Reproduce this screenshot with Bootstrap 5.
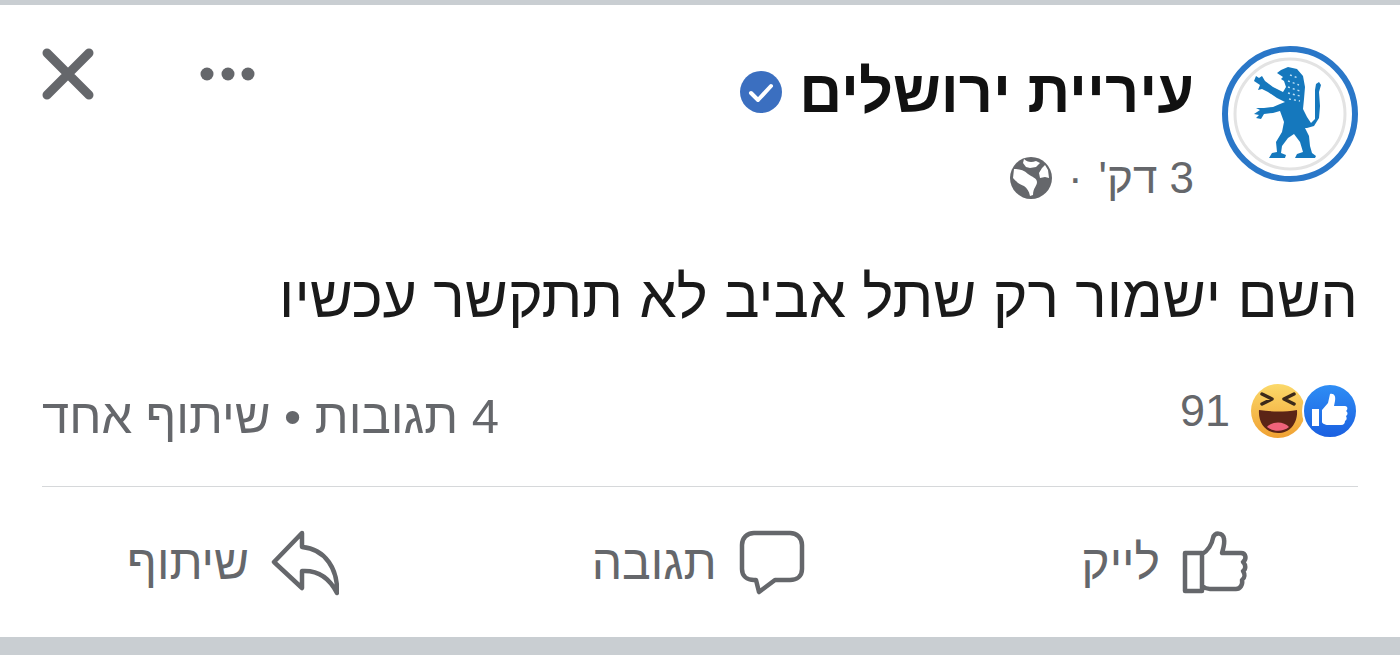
<!DOCTYPE html>
<html lang="he" dir="rtl">

<head>
    <meta charset="UTF-8">
    <meta name="viewport" content="width=device-width, initial-scale=1.0">
    <title>עיריית ירושלים</title>

    <link href="https://cdn.jsdelivr.net/npm/bootstrap@5.3.0/dist/css/bootstrap.min.css" rel="stylesheet">

    <style>
        html, body {
            height: 655px;
            overflow: hidden;
        }

        body {
            background-color: #fff;
            font-family: "Liberation Sans", sans-serif;
        }

        .page-wrap {
            height: 655px;
            border-top: 5px solid #c9ced2;
            border-bottom: 18px solid #c9ced2;
            padding: 41px 42px 0;
        }

        .post-avatar {
            width: 136px;
            height: 136px;
            flex: none;
        }

        .post-head {
            height: 136px;
        }

        .post-title {
            padding-right: 28px;
            padding-top: 12px;
        }

        .post-name {
            font-size: 59.5px;
            line-height: 68px;
            font-weight: 700;
            color: #111;
        }

        .post-time {
            font-size: 44px;
            line-height: 50px;
            color: #65676b;
            margin-top: 27px;
        }

        .head-tools {
            margin-top: 2px;
            gap: 106px;
        }

        .post-text {
            font-size: 59px;
            line-height: 70px;
            color: #1a1a1a;
            margin-top: 80px;
            height: 70px;
        }

        .post-stats {
            margin-top: 54px;
            height: 60px;
            color: #65676b;
            font-size: 49px;
            line-height: 60px;
        }

        .react-group {
            margin-bottom: 11px;
            font-size: 45px;
        }

        .react-count {
            margin-right: 20px;
        }

        .react-icons svg {
            overflow: visible;
        }

        .react-icons .react-like {
            position: relative;
            z-index: 1;
        }

        .react-icons .react-haha {
            margin-right: -4px;
        }

        .post-rule {
            border-top: 1px solid #d6d8da;
            margin-top: 40px;
        }

        .post-actions {
            margin-top: 40px;
            color: #65676b;
            font-size: 48px;
            line-height: 72px;
        }

        .post-actions > div {
            gap: 22px;
        }

        .act-like {
            margin-right: 108px;
        }

        .act-reply {
            margin-right: 24px;
        }

        .act-share {
            margin-left: 85px;
        }
    </style>
</head>

<body>
    <div class="page-wrap">
        <!-- כותרת הפוסט -->
        <div class="post-head d-flex justify-content-between align-items-start">
            <div class="d-flex">
                <svg class="post-avatar" viewBox="0 0 136 136">
                    <circle cx="68" cy="68" r="65" fill="#fff" stroke="#2a77c8" stroke-width="6" />
                    <circle cx="68" cy="68" r="55" fill="none" stroke="#e3e3e3" stroke-width="3" />
                    <path fill="#1578bd" d="M55 27l4-3 7-3 9 2 6 7 2 11-1 12-1 10 4 8 4 6 4-4V44l1-6 3-2 2 3-2 7 1 14-1 12-5 8-7 2h-2l4 8 1 10 2 7 4 3-1 2H73l2-4 6-2-3-10-6-8-6 4-6 8-1 7 5 2-1 3H47l3-5 5-1-1-10 6-10 2-10-4-11-7 2-9 1-3 5-5-1 3-3-5-1 6-4-4-2h8l9-1 7-3 5-2-8-4-9-6-6-3-4 1 2-5-6-4 2-5 3 2 3-2 3 5 8 6 10 5 3-5-2-6-3-2 2-2z" />
                    <path fill="none" stroke="#bfe0f5" stroke-width="1.4" stroke-dasharray="2 3" d="M68 29l8 3M66 35l11 4M66 41l12 4M66 47l12 3M67 53l11 2" />
                </svg>
                <div class="post-title">
                    <div class="d-flex align-items-center gap-3 post-name">
                        <span>עיריית ירושלים</span>
                        <svg width="44" height="44" viewBox="0 0 44 44">
                            <circle cx="22" cy="22" r="21" fill="#3b6fc0" />
                            <path d="M12 23l7 7 13-14" fill="none" stroke="#fff" stroke-width="4" stroke-linecap="round" stroke-linejoin="round" />
                        </svg>
                    </div>
                    <div class="d-flex align-items-center post-time">
                        <span>3 דק'</span>
                        <span class="mx-3">·</span>
                        <svg width="42" height="42" viewBox="0 0 42 42">
                            <circle cx="21" cy="21" r="21" fill="#65676b" />
                            <path fill="#fff" d="M14 2c3 3 7 4 12 2l4 2-4 4-6 1-4-1-3-4zM4 12c5 0 10 1 14 5 4 3 9 4 9 8 0 4-4 6-4 13l-3 1c-1-5-3-8-6-10-3-1-8-4-11-8zM35 8l3 5 1 8-4-1-5 1-1-5 3-5z" />
                        </svg>
                    </div>
                </div>
            </div>
            <div class="d-flex align-items-center head-tools">
                <svg width="56" height="24" viewBox="0 0 56 24">
                    <circle cx="7" cy="12" r="6.5" fill="#65676b" />
                    <circle cx="28" cy="12" r="6.5" fill="#65676b" />
                    <circle cx="48" cy="12" r="6.5" fill="#65676b" />
                </svg>
                <svg width="52" height="52" viewBox="0 0 52 52">
                    <path d="M5 5l42 42M47 5L5 47" stroke="#65676b" stroke-width="9" stroke-linecap="round" />
                </svg>
            </div>
        </div>

        <div class="post-text">השם ישמור רק שתל אביב לא תתקשר עכשיו</div>

        <!-- תגובות ולייקים -->
        <div class="post-stats d-flex justify-content-between align-items-center">
            <div class="react-group d-flex align-items-center">
                <div class="react-icons d-flex">
                    <svg class="react-like" width="56" height="56" viewBox="0 0 56 56">
                        <defs>
                            <linearGradient id="likeFill" x1="0" y1="0" x2="0" y2="1">
                                <stop offset="0" stop-color="#2f8ef5" />
                                <stop offset="1" stop-color="#1a5fe0" />
                            </linearGradient>
                        </defs>
                        <circle cx="28" cy="28" r="27" fill="url(#likeFill)" stroke="#fff" stroke-width="2" />
                        <path fill="#fff" d="M10 26h7v17h-7zM20 27l6-7 2-9c4-1 6 2 5 7l-1 5h11c3 0 3 4 1 5 2 1 2 4 0 5 1 2 1 4-1 5 0 2-1 4-4 4H26c-3 0-6-2-6-3z" />
                    </svg>
                    <svg class="react-haha" width="56" height="56" viewBox="0 0 56 56">
                        <defs>
                            <linearGradient id="hahaFill" x1="0" y1="0" x2="0" y2="1">
                                <stop offset="0" stop-color="#fbd96a" />
                                <stop offset="1" stop-color="#f0a132" />
                            </linearGradient>
                        </defs>
                        <circle cx="28" cy="28" r="27" fill="url(#hahaFill)" />
                        <path d="M12 11l10 5-10 5M44 11l-10 5 10 5" fill="none" stroke="#3c2a1a" stroke-width="3.5" stroke-linecap="round" stroke-linejoin="round" />
                        <path d="M9 27c12 2 26 2 38 0 1 13-7 23-19 23S8 40 9 27z" fill="#5b2416" />
                        <path d="M17 44c5-6 17-6 22 0-6 5-16 5-22 0z" fill="#f0637a" />
                    </svg>
                </div>
                <span class="react-count" dir="ltr">91</span>
            </div>
            <div>4 תגובות • שיתוף אחד</div>
        </div>

        <div class="post-rule"></div>

        <!-- כפתורי פעולה -->
        <div class="post-actions d-flex justify-content-between">
            <div class="act-like d-flex align-items-center">
                <svg width="68" height="68" viewBox="0 0 68 68">
                    <path d="M3 24h17v38H3zM20 25c6-3 10-10 11-16 1-6 10-6 11 1 1 5-1 10-2 14h19c5 0 6 6 2 9 3 3 3 7 0 9 2 3 2 7-1 9 1 5-2 9-6 9H28c-4 0-8-3-8-3" fill="none" stroke="#65676b" stroke-width="4.5" stroke-linejoin="round" stroke-linecap="round" />
                </svg>
                <span>לייק</span>
            </div>
            <div class="act-reply d-flex align-items-center">
                <svg width="66" height="66" viewBox="0 0 66 66">
                    <path d="M15 3h36c7 0 12 5 12 12v24c0 7-5 11-12 11H36L20 62l-3-12h-2C8 50 3 46 3 39V15C3 8 8 3 15 3z" fill="none" stroke="#65676b" stroke-width="4.5" stroke-linejoin="round" />
                </svg>
                <span>תגובה</span>
            </div>
            <div class="act-share d-flex align-items-center">
                <svg width="68" height="66" viewBox="0 0 68 66">
                    <path d="M31 3L3 32l28 26V41c15-1 27 6 35 22 1-23-11-44-35-46z" fill="none" stroke="#65676b" stroke-width="4.5" stroke-linejoin="round" />
                </svg>
                <span>שיתוף</span>
            </div>
        </div>
    </div>

    <script src="https://cdn.jsdelivr.net/npm/bootstrap@5.3.0/dist/js/bootstrap.bundle.min.js"></script>
</body>

</html>
